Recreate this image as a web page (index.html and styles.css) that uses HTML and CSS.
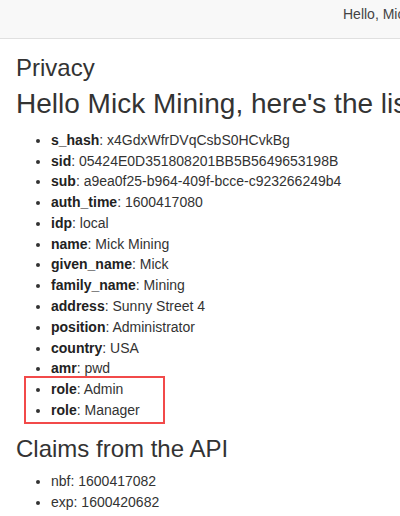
FILE: index.html
```html
<!DOCTYPE html>
<html lang="en">
<head>
<meta charset="utf-8">
<title>Privacy</title>
<link rel="stylesheet" href="styles.css">
</head>
<body>
<header class="navbar">
  <span class="navbar-text">Hello, Mick Mining</span>
</header>
<main class="content">
  <h1 class="page-title">Privacy</h1>
  <h2 class="greeting">Hello Mick Mining, here's the list of claims</h2>
  <ul class="claims">
    <li><b>s_hash</b>: x4GdxWfrDVqCsbS0HCvkBg</li>
    <li><b>sid</b>: 05424E0D351808201BB5B5649653198B</li>
    <li><b>sub</b>: a9ea0f25-b964-409f-bcce-c923266249b4</li>
    <li><b>auth_time</b>: 1600417080</li>
    <li><b>idp</b>: local</li>
    <li><b>name</b>: Mick Mining</li>
    <li><b>given_name</b>: Mick</li>
    <li><b>family_name</b>: Mining</li>
    <li><b>address</b>: Sunny Street 4</li>
    <li><b>position</b>: Administrator</li>
    <li><b>country</b>: USA</li>
    <li><b>amr</b>: pwd</li>
  </ul>
  <ul class="claims highlight">
    <li><b>role</b>: Admin</li>
    <li><b>role</b>: Manager</li>
  </ul>
  <h3 class="section-title">Claims from the API</h3>
  <ul class="claims api">
    <li>nbf: 1600417082</li>
    <li>exp: 1600420682</li>
  </ul>
</main>
</body>
</html>
```

FILE: styles.css
```css
html, body {
  margin: 0;
  padding: 0;
  overflow: hidden;
  background: #fff;
}

body {
  font-family: "Liberation Sans", Arial, sans-serif;
  font-size: 14px;
  line-height: 20px;
  color: #333;
}

.navbar {
  background: #f8f8f8;
  border-bottom: 1px solid #e0e0e0;
  display: flex;
  align-items: flex-start;
  padding: 4px 0 0 343px;
  box-sizing: content-box;
  height: 34px;
  white-space: nowrap;
  overflow: hidden;
}

.navbar-text {
  color: #444;
  font-size: 14px;
  line-height: 20px;
}

.content {
  padding: 0 0 0 16px;
  white-space: nowrap;
}

.page-title {
  margin: 16px 0 0;
  font-size: 24px;
  line-height: 26.4px;
  font-weight: 400;
  color: #333;
}

.greeting {
  margin: 8px 0 0;
  font-size: 28px;
  line-height: 30.8px;
  font-weight: 400;
  color: #333;
}

.claims {
  margin: 9.5px 0 0;
  padding: 0 0 0 35px;
  line-height: 20.8px;
}

.claims b {
  color: #222;
}

.highlight {
  margin: -3px 0 0 8px;
  width: 141px;
  box-sizing: border-box;
  border: 2px solid #f24a4a;
  padding: 1px 0 1px 25px;
}

.section-title {
  margin: 12.5px 0 0;
  font-size: 24px;
  line-height: 26.4px;
  font-weight: 400;
  color: #333;
}

.api {
  margin-top: 8px;
}
```
